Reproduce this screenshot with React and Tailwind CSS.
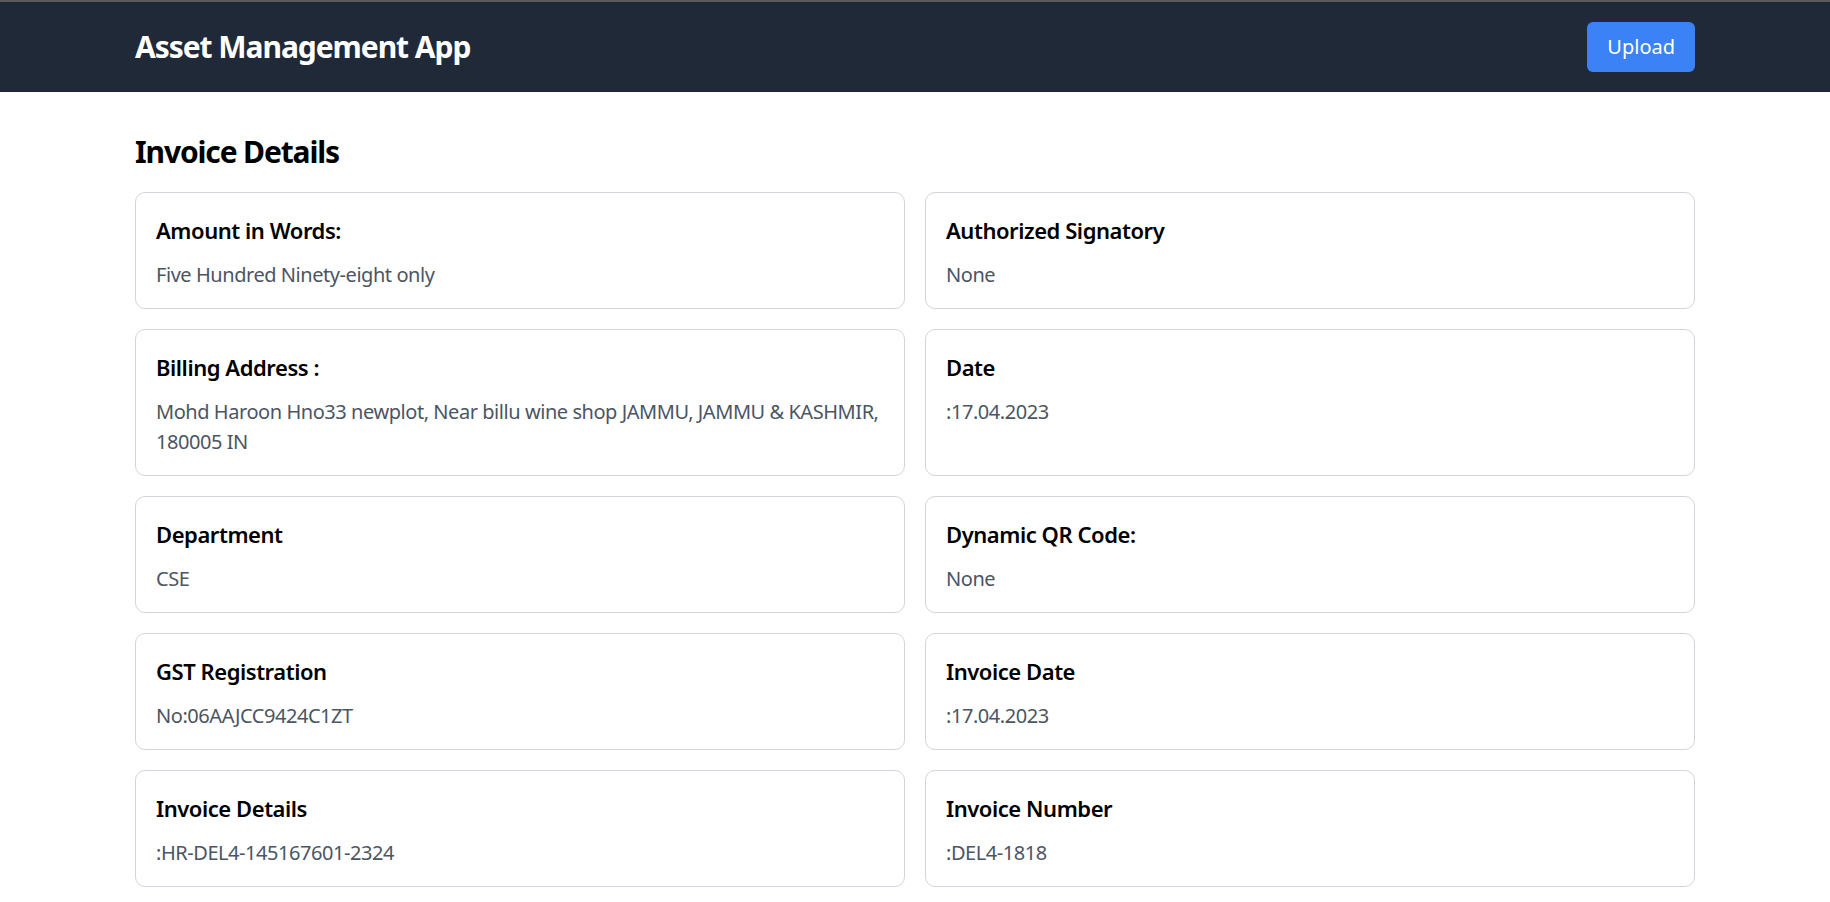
import React from 'react';

const fields = [
  { label: 'Amount in Words:', value: 'Five Hundred Ninety-eight only' },
  { label: 'Authorized Signatory', value: 'None' },
  { label: 'Billing Address :', value: 'Mohd Haroon Hno33 newplot, Near billu wine shop JAMMU, JAMMU & KASHMIR, 180005 IN' },
  { label: 'Date', value: ':17.04.2023' },
  { label: 'Department', value: 'CSE' },
  { label: 'Dynamic QR Code:', value: 'None' },
  { label: 'GST Registration', value: 'No:06AAJCC9424C1ZT' },
  { label: 'Invoice Date', value: ':17.04.2023' },
  { label: 'Invoice Details', value: ':HR-DEL4-145167601-2324' },
  { label: 'Invoice Number', value: ':DEL4-1818' },
];

const App = () => {
  return (
    <div className="min-h-screen bg-white text-black font-['Noto_Sans',sans-serif] tracking-[-0.028em]">
      {/* Top edge */}
      <div className="h-[2px] bg-[#5c5c5c]" />

      {/* Header */}
      <header className="bg-[#1f2937] py-[20px]">
        <div className="w-[1600px] mx-auto px-[20px] flex items-center justify-between">
          <h1 className="text-[30px] leading-[40px] font-bold text-white tracking-[-0.035em]">Asset Management App</h1>
          <button
            type="button"
            className="bg-[#3b82f6] text-white text-[20px] leading-[30px] px-[20px] py-[10px] rounded-[6px] tracking-normal"
          >
            Upload
          </button>
        </div>
      </header>

      {/* Invoice */}
      <main className="w-[1600px] mx-auto px-[20px] py-[40px]">
        <h2 className="text-[30px] leading-[40px] font-bold mb-[20px] tracking-[-0.038em]">Invoice Details</h2>
        <div className="grid grid-cols-2 gap-[20px]">
          {fields.map((f) => (
            <div key={f.label} className="border border-[#d1d5db] rounded-[10px] p-[20px]">
              <h3 className="text-[22px] leading-[35px] font-semibold mb-[10px]">{f.label}</h3>
              <p className="text-[20px] leading-[30px] text-[#4b5563] relative top-[2px]">{f.value}</p>
            </div>
          ))}
        </div>
      </main>
    </div>
  );
};

export default App;
